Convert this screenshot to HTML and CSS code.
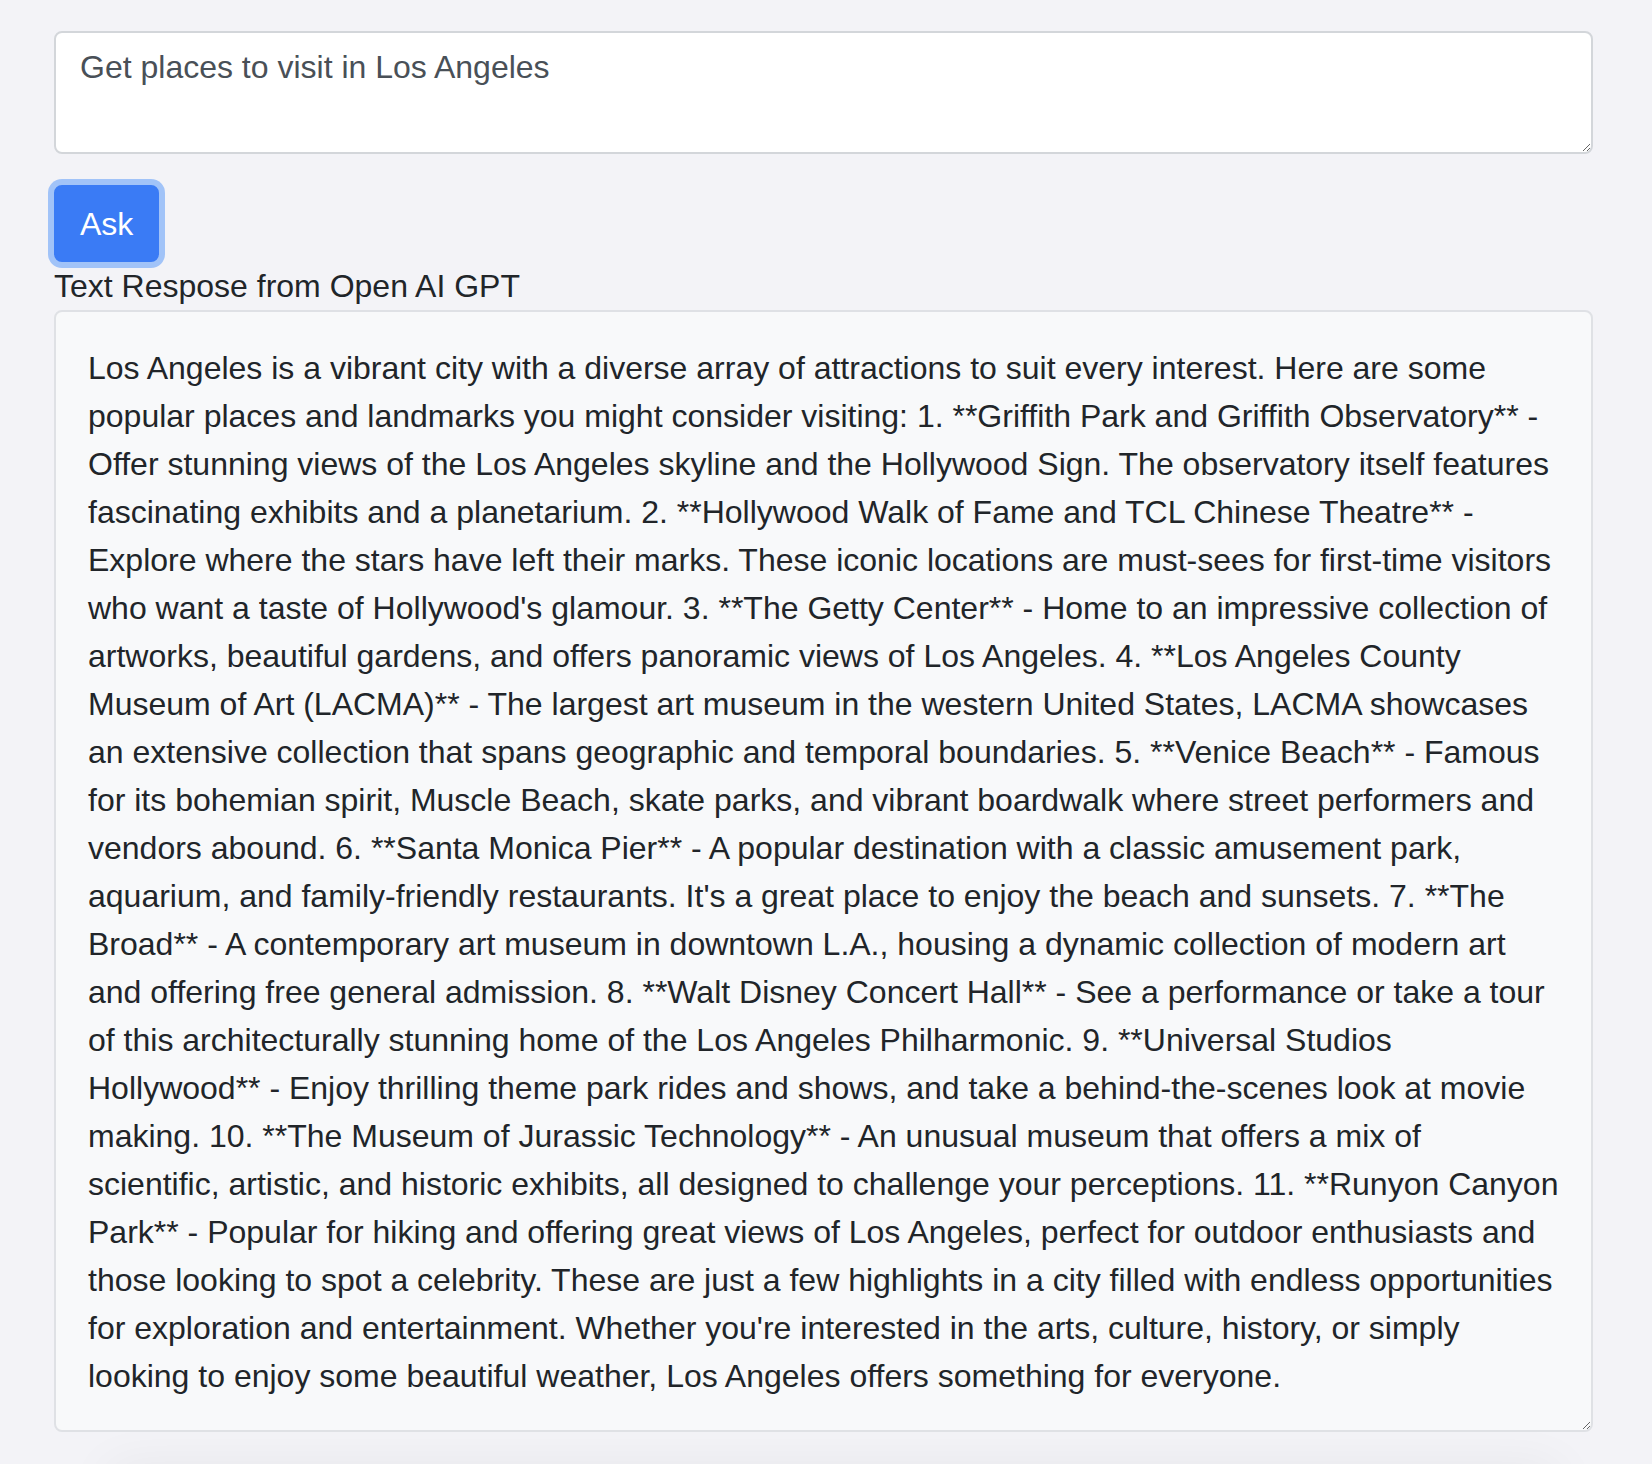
FILE: index.html
```html
<!DOCTYPE html>
<html lang="en">
<head>
<meta charset="utf-8">
<title>Ask Open AI GPT</title>
<link rel="stylesheet" href="styles.css">
</head>
<body>
<main class="page">
  <textarea class="prompt" rows="2">Get places to visit in Los Angeles</textarea>
  <button class="ask-btn" type="button">Ask</button>
  <label class="response-label">Text Respose from Open AI GPT</label>
  <textarea class="response" readonly>Los Angeles is a vibrant city with a diverse array of attractions to suit every interest. Here are some popular places and landmarks you might consider visiting: 1. **Griffith Park and Griffith Observatory** - Offer stunning views of the Los Angeles skyline and the Hollywood Sign. The observatory itself features fascinating exhibits and a planetarium. 2. **Hollywood Walk of Fame and TCL Chinese Theatre** - Explore where the stars have left their marks. These iconic locations are must-sees for first-time visitors who want a taste of Hollywood's glamour. 3. **The Getty Center** - Home to an impressive collection of artworks, beautiful gardens, and offers panoramic views of Los Angeles. 4. **Los Angeles County Museum of Art (LACMA)** - The largest art museum in the western United States, LACMA showcases an extensive collection that spans geographic and temporal boundaries. 5. **Venice Beach** - Famous for its bohemian spirit, Muscle Beach, skate parks, and vibrant boardwalk where street performers and vendors abound. 6. **Santa Monica Pier** - A popular destination with a classic amusement park, aquarium, and family-friendly restaurants. It's a great place to enjoy the beach and sunsets. 7. **The Broad** - A contemporary art museum in downtown L.A., housing a dynamic collection of modern art and offering free general admission. 8. **Walt Disney Concert Hall** - See a performance or take a tour of this architecturally stunning home of the Los Angeles Philharmonic. 9. **Universal Studios Hollywood** - Enjoy thrilling theme park rides and shows, and take a behind-the-scenes look at movie making. 10. **The Museum of Jurassic Technology** - An unusual museum that offers a mix of scientific, artistic, and historic exhibits, all designed to challenge your perceptions. 11. **Runyon Canyon Park** - Popular for hiking and offering great views of Los Angeles, perfect for outdoor enthusiasts and those looking to spot a celebrity. These are just a few highlights in a city filled with endless opportunities for exploration and entertainment. Whether you're interested in the arts, culture, history, or simply looking to enjoy some beautiful weather, Los Angeles offers something for everyone.</textarea>
  <div class="next-card"></div>
</main>
</body>
</html>
```

FILE: styles.css
```css
html, body {
  margin: 0;
  padding: 0;
  background: #f3f3f7;
  overflow: hidden;
}

body {
  height: 1464px;
  font-family: "Liberation Sans", Arial, Helvetica, sans-serif;
  font-size: 32px;
  line-height: 48px;
  color: #212529;
}

.page {
  display: flex;
  flex-direction: column;
  align-items: stretch;
  padding: 31px 59px 0 54px;
}

.prompt {
  box-sizing: border-box;
  display: block;
  width: 100%;
  height: 123px;
  margin: 0;
  padding: 10px 24px;
  border: 2px solid #d3d6da;
  border-radius: 8px;
  background: #ffffff;
  color: #495057;
  font-family: inherit;
  font-size: 32px;
  line-height: 48px;
  outline: none;
}

.ask-btn {
  align-self: flex-start;
  box-sizing: border-box;
  height: 77px;
  margin: 31px 0 0 0;
  padding: 0 24px;
  border: 2px solid #3a7bf5;
  border-radius: 8px;
  background: #3a7bf5;
  color: #ffffff;
  font-family: inherit;
  font-size: 32px;
  line-height: 48px;
  box-shadow: 0 0 0 6px #a1c3f8;
  cursor: pointer;
}

.response-label {
  display: block;
  font-size: 32px;
  line-height: 48px;
  color: #212529;
}

.response {
  position: relative;
  z-index: 1;
  box-sizing: border-box;
  display: block;
  width: 100%;
  height: 1122px;
  margin: 0;
  padding: 32px 32px;
  border: 2px solid #dfe1e5;
  border-radius: 8px;
  background: #f8f9fa;
  color: #212529;
  font-family: inherit;
  font-size: 32px;
  line-height: 48px;
  outline: none;
  overflow: hidden;
}

.next-card {
  height: 20px;
  margin: 44px 40px 0 60px;
  border-radius: 16px;
  background: #ecebf0;
  box-shadow: 0 0 50px 10px rgba(0, 0, 0, 0.06);
}
```
